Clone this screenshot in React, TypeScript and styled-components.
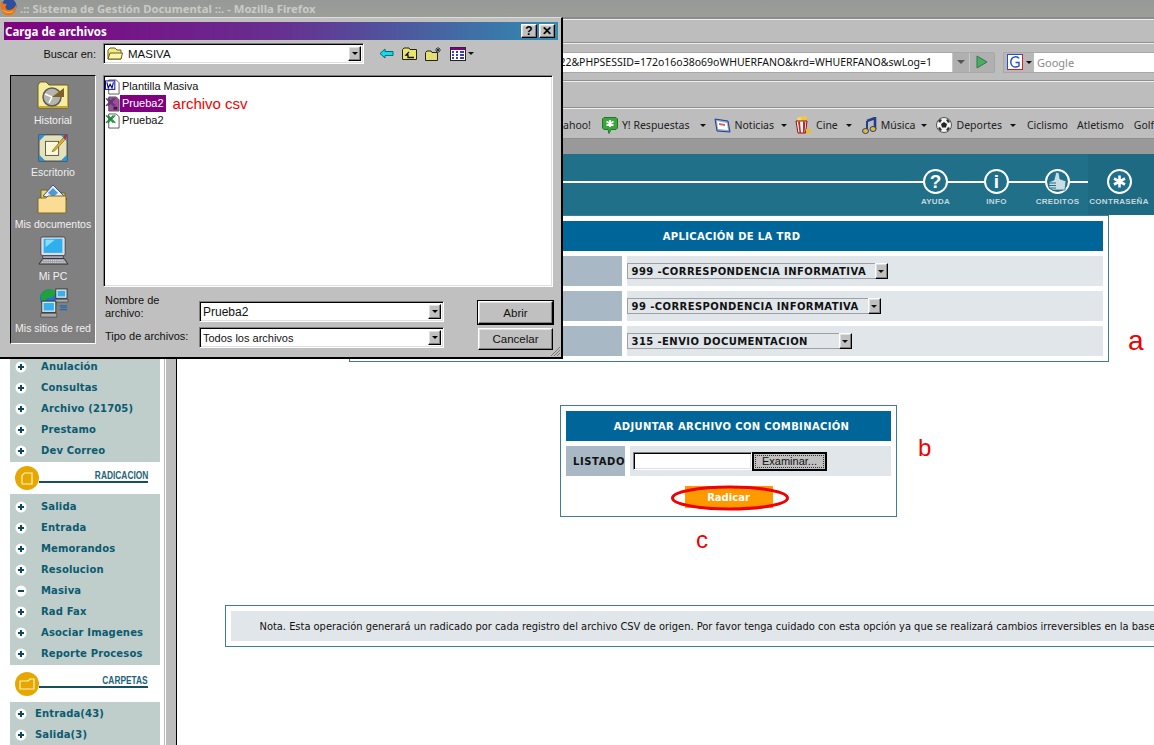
import React from 'react'
import styled, { createGlobalStyle, css } from 'styled-components'

const GlobalStyle = createGlobalStyle`
  html, body {
    margin: 0;
    padding: 0;
    background: #fff;
  }
  * {
    box-sizing: border-box;
  }
`

const uiFont = `"Liberation Sans", Arial, sans-serif`
const tahoma = `"Noto Sans", "DejaVu Sans", sans-serif`
const verdana = `"DejaVu Sans", Verdana, sans-serif`

const sunken = css`
  border: 1px solid;
  border-color: #808080 #fff #fff #808080;
  box-shadow: inset 1px 1px 0 #000, inset -1px -1px 0 #dfdfdf;
`

const raised = css`
  border: 1px solid;
  border-color: #fff #000 #000 #fff;
  box-shadow: inset -1px -1px 0 #808080, inset 1px 1px 0 #dfdfdf;
  background: #c0c0c0;
`

const Stage = styled.div`
  position: relative;
  width: 1154px;
  height: 745px;
  overflow: hidden;
  display: flex;
  flex-direction: column;
  background: #fff;
`

/* ---- browser chrome ---- */

const WindowTitle = styled.div`
  height: 19px;
  flex: none;
  display: flex;
  align-items: flex-start;
  gap: 3px;
  background: linear-gradient(#979996, #9c9e9a);
  border-bottom: 2px solid #8c8c8c;
  color: #c9cbc7;
  font: bold 11.3px ${tahoma};
  line-height: 17px;
  white-space: nowrap;
`

const Band = styled.div<{ $height: number }>`
  height: ${(p) => p.$height}px;
  flex: none;
  display: flex;
  align-items: center;
  justify-content: flex-end;
  background: #bdbdbd;
  border-top: 1px solid #eee;
  border-bottom: 1px solid #8f8f8f;
  font: 10.5px ${tahoma};
  color: #222;
  white-space: nowrap;
`

const AddressBox = styled.div`
  height: 21px;
  width: 995px;
  display: flex;
  align-items: stretch;
  border: 1px solid #a8a8a8;
  border-radius: 2px;
`

const AddressText = styled.div`
  flex: 1;
  min-width: 0;
  display: flex;
  justify-content: flex-end;
  align-items: center;
  padding-right: 20px;
  background: #fff;
  overflow: hidden;
  font: 10.5px ${tahoma};
  color: #111;
`

const AddressButton = styled.div<{ $width: number }>`
  width: ${(p) => p.$width}px;
  display: flex;
  align-items: center;
  justify-content: center;
  background: #b0b0b0;
  border-left: 1px solid #c8c8c8;
`

const SearchBox = styled.div`
  height: 21px;
  width: 151px;
  margin-left: 8px;
  display: flex;
  align-items: stretch;
  border: 1px solid #a8a8a8;
  border-right: 0;
`

const EnginePicker = styled.div`
  width: 30px;
  display: flex;
  align-items: center;
  gap: 3px;
  padding-left: 3px;
  background: #b8b8b8;
`

const SearchInput = styled.div`
  flex: 1;
  background: #fff;
  color: #8a8a8a;
  font: 11px ${tahoma};
  display: flex;
  align-items: center;
  padding-left: 3px;
`

const Bookmarks = styled.div`
  display: flex;
  align-items: center;
  width: 1154px;
  padding-left: 563px;
  padding-top: 3px;
  overflow: hidden;
`

const Bookmark = styled.span<{ $gap?: number }>`
  display: inline-flex;
  align-items: center;
  gap: 4px;
  margin-right: ${(p) => p.$gap ?? 0}px;
  flex: none;
`

const Caret = styled.i<{ $color?: string; $size?: number; $after?: number }>`
  display: inline-block;
  width: 0;
  height: 0;
  flex: none;
  margin-right: ${(p) => p.$after ?? 0}px;
  border-style: solid;
  border-color: ${(p) => p.$color ?? '#111'} transparent transparent;
  border-width: ${(p) => p.$size ?? 3}px ${(p) => p.$size ?? 3}px 0;
`

const TabStrip = styled.div`
  height: 15px;
  flex: none;
  background: #999;
`

/* ---- application header ---- */

const AppHeader = styled.header`
  position: relative;
  height: 61px;
  flex: none;
  display: flex;
  justify-content: flex-end;
  background: #20708a;
  &::before {
    content: '';
    position: absolute;
    left: 0;
    right: 0;
    top: 27px;
    height: 2px;
    background: #fff;
  }
`

const HeaderItem = styled.div<{ $active?: boolean }>`
  position: relative;
  width: ${(p) => (p.$active ? 66 : 61)}px;
  padding-right: ${(p) => (p.$active ? 4 : 0)}px;
  padding-top: 15px;
  display: flex;
  flex-direction: column;
  align-items: center;
  background: ${(p) => (p.$active ? '#1d6a82' : 'transparent')};
`

const HeaderCircle = styled.div`
  position: relative;
  width: 25px;
  height: 25px;
  border-radius: 50%;
  border: 2.5px solid #fff;
  background: #20708a;
  color: #fff;
  font: bold 19px ${uiFont};
  display: flex;
  align-items: center;
  justify-content: center;
`

const HeaderLabel = styled.div`
  margin-top: 2px;
  color: #c3d8de;
  font: bold 8px ${uiFont};
  line-height: 12px;
  letter-spacing: 0.3px;
  white-space: nowrap;
`

/* ---- sidebar ---- */

const Main = styled.div`
  flex: 1;
  min-height: 0;
  display: flex;
`

const Sidebar = styled.aside`
  width: 165px;
  flex: none;
  padding: 0 4px 0 10px;
  border-right: 1px solid #bbb;
  background: #fff;
`

const MenuGroup = styled.div<{ $top?: number; $bottom?: number; $fill?: boolean }>`
  background: #bfcdcb;
  padding-top: ${(p) => p.$top ?? 1}px;
  padding-bottom: ${(p) => p.$bottom ?? 1}px;
  ${(p) => p.$fill && 'height: 60px;'}
`

const MenuItem = styled.div<{ $indent?: number }>`
  height: 21px;
  display: flex;
  align-items: center;
  padding-left: 5px;
  gap: ${(p) => p.$indent ?? 14}px;
  color: #0b5b70;
  font: bold 10px ${verdana};
  letter-spacing: 0.15px;
  white-space: nowrap;
`

const MenuHead = styled.div<{ $height: number }>`
  height: ${(p) => p.$height}px;
  display: flex;
  align-items: center;
  padding: 0 12px 0 5px;
`

const HeadDisc = styled.div`
  width: 24px;
  height: 24px;
  flex: none;
  border-radius: 50%;
  background: #e6a800;
  display: flex;
  align-items: center;
  justify-content: center;
`

const HeadTitle = styled.div`
  flex: 1;
  margin-top: -6px;
  text-align: right;
  line-height: 12px;
  border-bottom: 2px solid #164f60;
`

const HeadLabel = styled.span`
  display: inline-block;
  color: #1e6478;
  font: bold 11px ${uiFont};
  transform: scaleX(0.76);
  transform-origin: right;
`

const Splitter = styled.div`
  width: 12px;
  flex: none;
  background: #bcbcbc;
  border-left: 1px solid #fff;
  border-right: 1px solid #000;
`

/* ---- page content ---- */

const Content = styled.main`
  flex: none;
  width: 1103px;
  display: flex;
  flex-direction: column;
  align-items: center;
`

const Panel = styled.section<{ $width: number; $top?: number }>`
  width: ${(p) => p.$width}px;
  margin-top: ${(p) => p.$top ?? 0}px;
  padding: 5px;
  border: 1px solid #3e7f8e;
  display: flex;
  flex-direction: column;
  gap: 5px;
  background: #fff;
`

const PanelHead = styled.div<{ $shift?: number }>`
  height: 30px;
  display: flex;
  align-items: center;
  justify-content: center;
  padding-left: ${(p) => p.$shift ?? 0}px;
  background: #006699;
  color: #fff;
  font: bold 10px ${verdana};
  letter-spacing: 0.35px;
  white-space: nowrap;
`

const FormRow = styled.div<{ $label: number }>`
  height: 30px;
  display: grid;
  grid-template-columns: ${(p) => p.$label}px 1fr;
  gap: 5px;
`

const RowLabel = styled.div`
  background: #a8b9c5;
  color: #111;
  display: flex;
  align-items: center;
  justify-content: flex-end;
  font: bold 10px ${verdana};
  letter-spacing: 0.6px;
`

const RowValue = styled.div`
  background: #e1e6ea;
  display: flex;
  align-items: center;
`

const SelectBox = styled.div<{ $width: number }>`
  width: ${(p) => p.$width}px;
  height: 16px;
  display: flex;
  align-items: stretch;
  justify-content: space-between;
  border: 1px solid #a0a0a0;
  border-right: 0;
  padding-left: 4px;
  color: #111;
  font: bold 10px ${verdana};
  letter-spacing: 0.42px;
  line-height: 16px;
  white-space: nowrap;
`

const SelectArrow = styled.div`
  ${raised}
  width: 13px;
  margin: -1px 0;
  display: flex;
  align-items: center;
  justify-content: center;
`

const FileInput = styled.div`
  ${sunken}
  width: 119px;
  height: 18px;
  margin-left: 3px;
  background: #fff;
`

const BrowseButton = styled.button`
  width: 75px;
  height: 19px;
  padding: 0;
  border: 2px solid #000;
  background: #c0c0c0;
  color: #111;
  font: 11px ${uiFont};
  outline: 1px dotted #333;
  outline-offset: -4px;
`

const SubmitRow = styled.div`
  position: relative;
  height: 35px;
  margin-top: -5px;
  padding-top: 10px;
  display: flex;
  justify-content: center;
`

const SubmitButton = styled.button`
  width: 88px;
  height: 22px;
  padding: 0;
  border: 0;
  background: #ff9900;
  color: #fff;
  font: bold 10px ${verdana};
`

const SubmitRing = styled.svg`
  position: absolute;
  left: 105px;
  top: 10px;
  overflow: visible;
`

const NoteText = styled.div`
  height: 30px;
  padding-left: 29px;
  display: flex;
  align-items: center;
  background: #e1e6ea;
  color: #111;
  font: 9.9px ${verdana};
  white-space: nowrap;
  overflow: hidden;
`

const Mark = styled.span<{ $x: number; $y: number; $size: number }>`
  position: absolute;
  left: ${(p) => p.$x}px;
  top: ${(p) => p.$y}px;
  color: #f00000;
  font: ${(p) => p.$size}px ${uiFont};
  line-height: 1;
`

/* ---- file dialog ---- */

const Dialog = styled.div`
  position: absolute;
  left: 0;
  top: 17px;
  width: 563px;
  height: 342px;
  padding: 4px 3px 0 4px;
  background: #c0c0c0;
  border-top: 1px solid #dcdcdc;
  border-right: 2px solid #000;
  border-bottom: 2px solid #000;
  font: 11px ${uiFont};
  color: #111;
  display: flex;
  flex-direction: column;
`

const DialogTitle = styled.div`
  height: 18px;
  flex: none;
  display: flex;
  align-items: center;
  justify-content: space-between;
  padding: 0 3px 0 1px;
  background: linear-gradient(90deg, #800080 0%, #663090 50%, #2f8cb0 100%);
  color: #fff;
  font: bold 11.5px ${tahoma};
`

const TitleButtons = styled.div`
  display: flex;
  gap: 2px;
`

const TitleButton = styled.div`
  ${raised}
  width: 16px;
  height: 14px;
  display: flex;
  align-items: center;
  justify-content: center;
  color: #000;
  font: bold 12px ${uiFont};
`

const LookIn = styled.div`
  height: 21px;
  margin-top: 3px;
  flex: none;
  display: flex;
  align-items: center;
`

const LookInLabel = styled.div`
  width: 92px;
  text-align: right;
`

const Combo = styled.div<{ $width: number; $height: number; $left?: number }>`
  ${sunken}
  width: ${(p) => p.$width}px;
  height: ${(p) => p.$height}px;
  margin-left: ${(p) => p.$left ?? 0}px;
  flex: none;
  display: flex;
  align-items: center;
  justify-content: space-between;
  gap: 4px;
  padding: 2px 2px 2px 3px;
  background: #fff;
`

const ComboValue = styled.div<{ $size?: number }>`
  flex: 1;
  display: flex;
  align-items: center;
  gap: 5px;
  font-size: ${(p) => p.$size ?? 11.5}px;
`

const ComboArrow = styled.div`
  ${raised}
  width: 13px;
  height: 100%;
  display: flex;
  align-items: center;
  justify-content: center;
`

const ToolIcons = styled.div`
  margin-left: 15px;
  display: flex;
  align-items: center;
  gap: 8px;
`

const DialogBody = styled.div`
  margin: 11px 0 0 6px;
  display: flex;
  gap: 7px;
`

const Places = styled.div`
  width: 86px;
  height: 269px;
  flex: none;
  padding-top: 4px;
  border: 1px solid;
  border-color: #000 #fff #fff #000;
  outline: 1px solid #808080;
  outline-offset: -2px;
  background: #808080;
  display: flex;
  flex-direction: column;
`

const Place = styled.div`
  height: 52px;
  flex: none;
  display: flex;
  flex-direction: column;
  align-items: center;
  justify-content: flex-end;
  gap: 3px;
  color: #f0f0f0;
  font-size: 10.5px;
  line-height: 14px;
  padding-bottom: 5px;
  white-space: nowrap;
`

const DialogRight = styled.div`
  width: 450px;
  flex: none;
`

const FileList = styled.div`
  ${sunken}
  height: 212px;
  padding: 2px 1px;
  background: #fff;
`

const FileRow = styled.div`
  height: 17px;
  display: flex;
  align-items: center;
  color: #111;
`

const FileName = styled.span<{ $selected?: boolean }>`
  height: 17px;
  line-height: 17px;
  padding: 0 2px;
  background: ${(p) => (p.$selected ? '#800080' : 'transparent')};
  color: ${(p) => (p.$selected ? '#fff' : '#111')};
`

const FileNote = styled.span`
  margin-left: 7px;
  color: #f00000;
  font-size: 15px;
`

const BottomForm = styled.div`
  margin-top: 14px;
  display: flex;
`

const FieldColumn = styled.div`
  width: 341px;
  flex: none;
  display: flex;
  flex-direction: column;
  gap: 5px;
`

const FieldRow = styled.div`
  display: flex;
  align-items: center;
  height: 21px;
`

const FieldLabel = styled.div<{ $lift?: number }>`
  width: 96px;
  padding-left: 2px;
  flex: none;
  line-height: 13px;
  margin-top: ${(p) => p.$lift ?? 0}px;
`

const ButtonColumn = styled.div`
  margin-left: 34px;
  width: 75px;
  display: flex;
  flex-direction: column;
  gap: 4px;
`

const DialogButton = styled.button<{ $default?: boolean }>`
  ${raised}
  height: ${(p) => (p.$default ? 23 : 22)}px;
  padding: 0;
  color: #111;
  font: 11.5px ${uiFont};
  ${(p) => p.$default && 'outline: 1px solid #000; outline-offset: 0;'}
`

const Grip = styled.svg`
  position: absolute;
  right: 0;
  bottom: 0;
`

/* ---- drawings ---- */

const FirefoxLogo = () => (
  <svg width="17" height="16" viewBox="0 0 17 16">
    <circle cx="9" cy="6" r="7.500" fill="#2c4f9e" />
    <path d="M1 1C-1 8 3 16 9 15.500C14 15 17 10 16 5C14 9 11 10.500 8 10C5 9 5 6 7 4C4 4.500 2 3 1 1Z" fill="#e8751a" />
    <path d="M2 9C4 13 10 15 14 11C10 12.500 5 12 2 9Z" fill="#f6b53c" />
  </svg>
)

const Bullet = ({ minus }: { minus?: boolean }) => (
  <svg width="12" height="12" viewBox="0 0 12 12" style={{ flex: 'none' }}>
    <circle cx="6" cy="6" r="5.500" fill="#fff" />
    <path d={minus ? 'M3 6H9' : 'M3 6H9M6 3V9'} stroke="#0b4a5c" strokeWidth="2" />
  </svg>
)

const PageGlyph = () => (
  <svg width="12" height="13" viewBox="0 0 12 13">
    <path d="M1 3.500L3.500 1H11V12H1Z" fill="none" stroke="#fff2c0" strokeWidth="1.200" />
  </svg>
)

const FolderGlyph = () => (
  <svg width="16" height="12" viewBox="0 0 16 12">
    <path d="M1 3H9L11 1H15V11H1Z" fill="none" stroke="#fff2c0" strokeWidth="1.200" />
  </svg>
)

const HistoryIcon = () => (
  <svg width="32" height="30" viewBox="0 0 32 30">
    <path d="M1 28V5L3 2H9L12 5H31V28Z" fill="#f7eda0" stroke="#6e6410" />
    <path d="M2 27H31" stroke="#c8a830" strokeWidth="2" />
    <circle cx="15" cy="17" r="9" fill="#b5b5ad" stroke="#5c5c58" strokeWidth="1.500" />
    <path d="M15 17L27 8V17Z" fill="#7d6228" />
    <path d="M15 17L8 14M15 17L12 23" stroke="#fff" strokeWidth="1.500" />
  </svg>
)

const DesktopIcon = () => (
  <svg width="32" height="32" viewBox="0 0 32 32">
    <rect x="1" y="3" width="30" height="28" fill="#e6e2b8" stroke="#334" />
    <path d="M1 3H8L1 10ZM31 3H24L31 10ZM1 31H8L1 24ZM31 31H24L31 24Z" fill="#2b93d8" />
    <rect x="8" y="10" width="14" height="15" fill="#fbf8d8" stroke="#555" />
    <path d="M16 19L27 6L29 8L18 20L15 21Z" fill="#e8b020" stroke="#553" strokeWidth="0.600" />
    <path d="M27 6L29 2L31 4L29 8Z" fill="#d02020" />
  </svg>
)

const DocumentsIcon = () => (
  <svg width="32" height="30" viewBox="0 0 32 30">
    <path d="M4 6H10L12 9H28V20H4Z" fill="#e8d878" stroke="#6e6410" />
    <path d="M6 12L16 1L30 15L27 18Z" fill="#e8f0ff" stroke="#3f4f80" />
    <path d="M16 4L21 9L16 13L11 9Z" fill="#4c9ad8" />
    <path d="M1 14H9L11 12H29V29H1Z" fill="#fbdc94" stroke="#7a6a20" />
  </svg>
)

const ComputerIcon = () => (
  <svg width="32" height="32" viewBox="0 0 32 32">
    <rect x="3" y="1" width="26" height="20" rx="2" fill="#d8dcec" stroke="#444" />
    <rect x="6" y="3" width="20" height="15" fill="#2fb0ee" />
    <path d="M8 4H18L8 12Z" fill="#8adcfa" />
    <path d="M5 21H27V24H5Z" fill="#a8a8b8" stroke="#444" />
    <path d="M1 30L5 24H28L32 30Z" fill="#9c9ca8" stroke="#333" />
    <path d="M6 26H27M4 28H29" stroke="#eee" strokeWidth="1" strokeDasharray="1 1" />
  </svg>
)

const NetworkIcon = () => (
  <svg width="32" height="32" viewBox="0 0 32 32">
    <circle cx="12" cy="11" r="10" fill="#1f72d0" />
    <path d="M5 4C9 1 15 0 20 4L15 10L9 11L6 18C3 14 2 8 5 4ZM16 15L21 13L20 19L15 20Z" fill="#1fa23a" />
    <rect x="19" y="1" width="12" height="10" fill="#dfe3ee" stroke="#333" />
    <rect x="21" y="3" width="8" height="6" fill="#35b2ee" />
    <path d="M18 12H32V15H18Z" fill="#aaa" stroke="#333" strokeWidth="0.600" />
    <rect x="4" y="14" width="15" height="12" fill="#dfe3ee" stroke="#333" />
    <rect x="6" y="16" width="11" height="8" fill="#35b2ee" />
    <path d="M3 27H20V31H3Z" fill="#aaa" stroke="#333" strokeWidth="0.600" />
    <path d="M23 19H31M23 23H31M24 21H31" stroke="#2468b0" strokeWidth="1.200" />
  </svg>
)

const SmallFolder = () => (
  <svg width="16" height="14" viewBox="0 0 16 14">
    <path d="M1 12V3L3 1H8L10 3H14V12Z" fill="#f5e88a" stroke="#6a6010" />
    <path d="M1 12L3 6H15.500L14 12Z" fill="#fff4b0" stroke="#6a6010" />
  </svg>
)

const BackIcon = () => (
  <svg width="15" height="11" viewBox="0 0 15 11">
    <path d="M1 5.500L6 1V3.500H14V7.500H6V10Z" fill="#10dcea" stroke="#006a78" />
  </svg>
)

const UpFolderIcon = () => (
  <svg width="15" height="13" viewBox="0 0 15 13">
    <path d="M0.500 12.500V2.500L2 1H7L8 2.500H14.500V12.500Z" fill="#eae66a" stroke="#222" />
    <path d="M7 5L4 8H6V10.500H12" fill="none" stroke="#111" strokeWidth="1.300" />
  </svg>
)

const NewFolderIcon = () => (
  <svg width="17" height="15" viewBox="0 0 17 15">
    <path d="M0.500 14.500V6.500L2 5H6L7 6.500H12.500V14.500Z" fill="#e4e070" stroke="#222" />
    <path d="M13 1V7M10 4H16M11 2L15 6M15 2L11 6" stroke="#222" strokeWidth="0.800" />
  </svg>
)

const ViewsIcon = () => (
  <svg width="16" height="14" viewBox="0 0 16 14">
    <rect x="0.500" y="0.500" width="15" height="13" fill="#fff" stroke="#222" />
    <rect x="0.500" y="0.500" width="15" height="2.500" fill="#800080" />
    <path d="M2 5H4M6 5H8M10 5H14M2 8H4M6 8H8M10 8H14M2 11H4M6 11H8M10 11H14" stroke="#000090" strokeWidth="1.500" />
  </svg>
)

const FileIcon = ({ kind }: { kind: 'word' | 'csv' | 'excel' }) => {
  const tint = kind === 'csv' ? '#a04aa0' : '#fff'
  return (
    <svg width="15" height="16" viewBox="0 0 16 16" style={{ flex: 'none' }}>
      <path d="M4 0.500H12L15 3.500V15.500H4Z" fill={tint} stroke="#555" />
      {kind === 'word' && (
        <>
          <rect x="0.500" y="1.500" width="10" height="9" fill="#fff" stroke="#0000a0" />
          <path d="M2 3L3.500 9L5.500 5L7.500 9L9 3" fill="none" stroke="#0000a0" strokeWidth="1.200" />
        </>
      )}
      {kind === 'excel' && <path d="M1 2L9 10M9 2L1 10M3 2L11 10M11 2L3 10" stroke="#1a8a3a" strokeWidth="1.400" />}
      {kind === 'csv' && (
        <>
          <path d="M1 2L9 10M9 2L1 10M3 2L11 10M11 2L3 10" stroke="#5a3a6a" strokeWidth="1.400" />
          <rect x="9" y="11" width="4" height="3" fill="#401040" />
        </>
      )}
    </svg>
  )
}

const GoIcon = () => (
  <svg width="14" height="14" viewBox="0 0 14 14">
    <path d="M2 1L12 7L2 13Z" fill="#4cae5c" stroke="#2c7a50" />
  </svg>
)

const GoogleBadge = () => (
  <svg width="16" height="16" viewBox="0 0 16 16">
    <rect x="0.500" y="0.500" width="15" height="15" fill="#fff" stroke="#2a4fc0" />
    <path d="M0.500 15.500H15.500V0.500" fill="none" stroke="#d02020" />
    <path d="M12 4.500C10.500 2 5 2 4 6.500C3 11 6 13.500 9 13C11 12.800 12 12 12 12V8.500H8.500" fill="none" stroke="#1f50c8" strokeWidth="1.400" />
  </svg>
)

const AnswersIcon = () => (
  <svg width="16" height="17" viewBox="0 0 16 17">
    <path d="M2 0.500H14L15.500 2V11L14 12.500H9L7 16.500L6 12.500H2L0.500 11V2Z" fill="#3ca63c" stroke="#1c7a2c" />
    <path d="M8 3V10M4.500 4.500L11.500 8.500M11.500 4.500L4.500 8.500" stroke="#fff" strokeWidth="1.800" />
  </svg>
)

const NewsIcon = () => (
  <svg width="17" height="15" viewBox="0 0 17 15">
    <path d="M1 1L14 3L16 14L3 13Z" fill="#8aa8dc" stroke="#2a3f80" />
    <path d="M3 3L13 5L14 12L4 11Z" fill="#fff" />
    <path d="M5 5L11 6V8L5 7Z" fill="#e06060" />
  </svg>
)

const PopcornIcon = () => (
  <svg width="17" height="18" viewBox="0 0 17 18">
    <circle cx="5" cy="4" r="3" fill="#f5d860" />
    <circle cx="9" cy="3" r="3" fill="#f0c840" />
    <path d="M1 5H12L10.500 17H3Z" fill="#fff" stroke="#801010" />
    <path d="M3 5.500L4.500 17H6L5 5.500ZM8 5.500V17H9.500L10.500 5.500Z" fill="#d42020" />
    <rect x="11" y="13" width="5" height="4" fill="#e8c020" />
  </svg>
)

const MusicIcon = () => (
  <svg width="15" height="17" viewBox="0 0 15 17">
    <path d="M5 4L13 1V12" fill="none" stroke="#22408a" strokeWidth="2.600" />
    <path d="M5 4V14" stroke="#22408a" strokeWidth="2" />
    <ellipse cx="3.500" cy="14" rx="3" ry="2.500" fill="#eeb820" stroke="#22408a" />
    <ellipse cx="11" cy="12" rx="3" ry="2.500" fill="#eeb820" stroke="#22408a" />
  </svg>
)

const BallIcon = () => (
  <svg width="16" height="16" viewBox="0 0 16 16">
    <circle cx="8" cy="8" r="7.500" fill="#f2f2f2" stroke="#555" />
    <path d="M8 5L11 7L10 10.500H6L5 7Z" fill="#222" />
    <path d="M2 4L4 2L6 3L4 6ZM12 2L14 5L12 6L10 3ZM2 11L4 10L6 13L4 14ZM14 11L12 14L10 13L12 10Z" fill="#333" />
  </svg>
)

const ThumbIcon = () => (
  <svg width="21" height="21" viewBox="0 0 21 21" style={{ flex: 'none' }}>
    <path d="M9 1L12 2L13 8L19 10L18 19H6L2 17V11L7 9Z" fill="#c8dde4" stroke="#20708a" strokeWidth="0.800" />
    <path d="M2 12H9M2 14.500H9M2 17H9" stroke="#20708a" strokeWidth="1" />
  </svg>
)

const AsteriskIcon = () => (
  <svg width="13" height="13" viewBox="0 0 13 13" style={{ flex: 'none' }}>
    <path d="M6.500 0.500V12.500M1 3.500L12 9.500M12 3.500L1 9.500" stroke="#fff" strokeWidth="2.600" />
  </svg>
)

const headerItems = [
  { label: 'AYUDA', mark: '?' },
  { label: 'INFO', mark: 'i' },
  { label: 'CREDITOS', mark: 'thumb' },
  { label: 'CONTRASEÑA', mark: '*' },
]

const renderMark = (mark: string) => {
  if (mark === 'thumb') return <ThumbIcon />
  if (mark === '*') return <AsteriskIcon />
  return mark
}

const archiveMenu = ['Anulación', 'Consultas', 'Archivo (21705)', 'Prestamo', 'Dev Correo']
const filingMenu = ['Salida', 'Entrada', 'Memorandos', 'Resolucion', 'Masiva', 'Rad Fax', 'Asociar Imagenes', 'Reporte Procesos']
const folderMenu = ['Entrada(43)', 'Salida(3)']

const trdRows = [
  { value: '999 -CORRESPONDENCIA INFORMATIVA', width: 261 },
  { value: '99 -CORRESPONDENCIA INFORMATIVA', width: 254 },
  { value: '315 -ENVIO DOCUMENTACION', width: 225 },
]

const places = [
  { label: 'Historial', icon: <HistoryIcon /> },
  { label: 'Escritorio', icon: <DesktopIcon /> },
  { label: 'Mis documentos', icon: <DocumentsIcon /> },
  { label: 'Mi PC', icon: <ComputerIcon /> },
  { label: 'Mis sitios de red', icon: <NetworkIcon /> },
]

export default function App() {
  return (
    <Stage>
      <GlobalStyle />
      <WindowTitle>
        <FirefoxLogo />
        .:: Sistema de Gestión Documental ::. - Mozilla Firefox
      </WindowTitle>
      <Band $height={24} />
      <Band $height={38}>
        <AddressBox>
          <AddressText>22&amp;PHPSESSID=172o16o38o69oWHUERFANO&amp;krd=WHUERFANO&amp;swLog=1</AddressText>
          <AddressButton $width={17}>
            <Caret $color="#555" $size={4} />
          </AddressButton>
          <AddressButton $width={25}>
            <GoIcon />
          </AddressButton>
        </AddressBox>
        <SearchBox>
          <EnginePicker>
            <GoogleBadge />
            <Caret />
          </EnginePicker>
          <SearchInput>Google</SearchInput>
        </SearchBox>
      </Band>
      <Band $height={27} />
      <Band $height={31}>
        <Bookmarks>
          <Bookmark $gap={11}>ahoo!</Bookmark>
          <Bookmark $gap={10}>
            <AnswersIcon />Y! Respuestas
          </Bookmark>
          <Caret $after={8} />
          <Bookmark $gap={7}>
            <NewsIcon />Noticias
          </Bookmark>
          <Caret $after={8} />
          <Bookmark $gap={8}>
            <PopcornIcon />Cine
          </Bookmark>
          <Caret $after={10} />
          <Bookmark $gap={6}>
            <MusicIcon />Música
          </Bookmark>
          <Caret $after={9} />
          <Bookmark $gap={8}>
            <BallIcon />Deportes
          </Bookmark>
          <Caret $after={11} />
          <Bookmark $gap={9}>Ciclismo</Bookmark>
          <Bookmark $gap={10}>Atletismo</Bookmark>
          <Bookmark>Golf</Bookmark>
        </Bookmarks>
      </Band>
      <TabStrip />
      <AppHeader>
        {headerItems.map((item) => (
          <HeaderItem key={item.label} $active={item.mark === '*'}>
            <HeaderCircle>{renderMark(item.mark)}</HeaderCircle>
            <HeaderLabel>{item.label}</HeaderLabel>
          </HeaderItem>
        ))}
      </AppHeader>
      <Main>
        <Sidebar>
          <MenuGroup $top={141} $bottom={1}>
            {archiveMenu.map((name) => (
              <MenuItem key={name}>
                <Bullet />
                {name}
              </MenuItem>
            ))}
          </MenuGroup>
          <MenuHead $height={32}>
            <HeadDisc>
              <PageGlyph />
            </HeadDisc>
            <HeadTitle>
              <HeadLabel>RADICACION</HeadLabel>
            </HeadTitle>
          </MenuHead>
          <MenuGroup $top={2} $bottom={1}>
            {filingMenu.map((name) => (
              <MenuItem key={name}>
                <Bullet minus={name === 'Masiva'} />
                {name}
              </MenuItem>
            ))}
          </MenuGroup>
          <MenuHead $height={37}>
            <HeadDisc>
              <FolderGlyph />
            </HeadDisc>
            <HeadTitle>
              <HeadLabel>CARPETAS</HeadLabel>
            </HeadTitle>
          </MenuHead>
          <MenuGroup $fill>
            {folderMenu.map((name) => (
              <MenuItem key={name} $indent={8}>
                <Bullet />
                {name}
              </MenuItem>
            ))}
          </MenuGroup>
        </Sidebar>
        <Splitter />
        <Content>
          <Panel $width={760}>
            <PanelHead $shift={6}>APLICACIÓN DE LA TRD</PanelHead>
            {trdRows.map((row) => (
              <FormRow key={row.value} $label={267}>
                <RowLabel />
                <RowValue>
                  <SelectBox $width={row.width}>
                    {row.value}
                    <SelectArrow>
                      <Caret />
                    </SelectArrow>
                  </SelectBox>
                </RowValue>
              </FormRow>
            ))}
          </Panel>
          <Panel $width={337} $top={43}>
            <PanelHead $shift={6}>ADJUNTAR ARCHIVO CON COMBINACIÓN</PanelHead>
            <FormRow $label={59}>
              <RowLabel>LISTADO</RowLabel>
              <RowValue>
                <FileInput />
                <BrowseButton>Examinar...</BrowseButton>
              </RowValue>
            </FormRow>
            <SubmitRow>
              <SubmitButton>Radicar</SubmitButton>
              <SubmitRing width="118" height="24" viewBox="0 0 118 24">
                <ellipse cx="59" cy="12" rx="57.500" ry="11" fill="none" stroke="#f00000" strokeWidth="3" />
              </SubmitRing>
            </SubmitRow>
          </Panel>
          <Panel $width={1008} $top={88}>
            <NoteText>
              Nota. Esta operación generará un radicado por cada registro del archivo CSV de origen. Por favor tenga cuidado con esta opción ya que se realizará cambios irreversibles en la base de datos.
            </NoteText>
          </Panel>
        </Content>
      </Main>

      <Mark $x={1128} $y={327} $size={28}>a</Mark>
      <Mark $x={918} $y={436} $size={24}>b</Mark>
      <Mark $x={696} $y={528} $size={24}>c</Mark>

      <Dialog>
        <DialogTitle>
          Carga de archivos
          <TitleButtons>
            <TitleButton>?</TitleButton>
            <TitleButton>✕</TitleButton>
          </TitleButtons>
        </DialogTitle>
        <LookIn>
          <LookInLabel>Buscar en:</LookInLabel>
          <Combo $width={261} $height={21} $left={7}>
            <ComboValue>
              <SmallFolder />
              MASIVA
            </ComboValue>
            <ComboArrow>
              <Caret $color="#000" />
            </ComboArrow>
          </Combo>
          <ToolIcons>
            <BackIcon />
            <UpFolderIcon />
            <NewFolderIcon />
            <ViewsIcon />
            <Caret style={{ marginLeft: -6 }} />
          </ToolIcons>
        </LookIn>
        <DialogBody>
          <Places>
            {places.map((place) => (
              <Place key={place.label}>
                {place.icon}
                {place.label}
              </Place>
            ))}
          </Places>
          <DialogRight>
            <FileList>
              <FileRow>
                <FileIcon kind="word" />
                <FileName>Plantilla Masiva</FileName>
              </FileRow>
              <FileRow>
                <FileIcon kind="csv" />
                <FileName $selected>Prueba2</FileName>
                <FileNote>archivo csv</FileNote>
              </FileRow>
              <FileRow>
                <FileIcon kind="excel" />
                <FileName>Prueba2</FileName>
              </FileRow>
            </FileList>
            <BottomForm>
              <FieldColumn>
                <FieldRow>
                  <FieldLabel $lift={-10}>
                    Nombre de
                    <br />
                    archivo:
                  </FieldLabel>
                  <Combo $width={245} $height={21}>
                    <ComboValue $size={12}>Prueba2</ComboValue>
                    <ComboArrow>
                      <Caret $color="#000" />
                    </ComboArrow>
                  </Combo>
                </FieldRow>
                <FieldRow>
                  <FieldLabel $lift={-3}>Tipo de archivos:</FieldLabel>
                  <Combo $width={245} $height={21}>
                    <ComboValue $size={11}>Todos los archivos</ComboValue>
                    <ComboArrow>
                      <Caret $color="#000" />
                    </ComboArrow>
                  </Combo>
                </FieldRow>
              </FieldColumn>
              <ButtonColumn>
                <DialogButton $default>Abrir</DialogButton>
                <DialogButton>Cancelar</DialogButton>
              </ButtonColumn>
            </BottomForm>
          </DialogRight>
        </DialogBody>
        <Grip width="12" height="12" viewBox="0 0 12 12">
          <path d="M11 2L2 11M11 5L5 11M11 8L8 11" stroke="#777" strokeWidth="1" />
        </Grip>
      </Dialog>
    </Stage>
  )
}
